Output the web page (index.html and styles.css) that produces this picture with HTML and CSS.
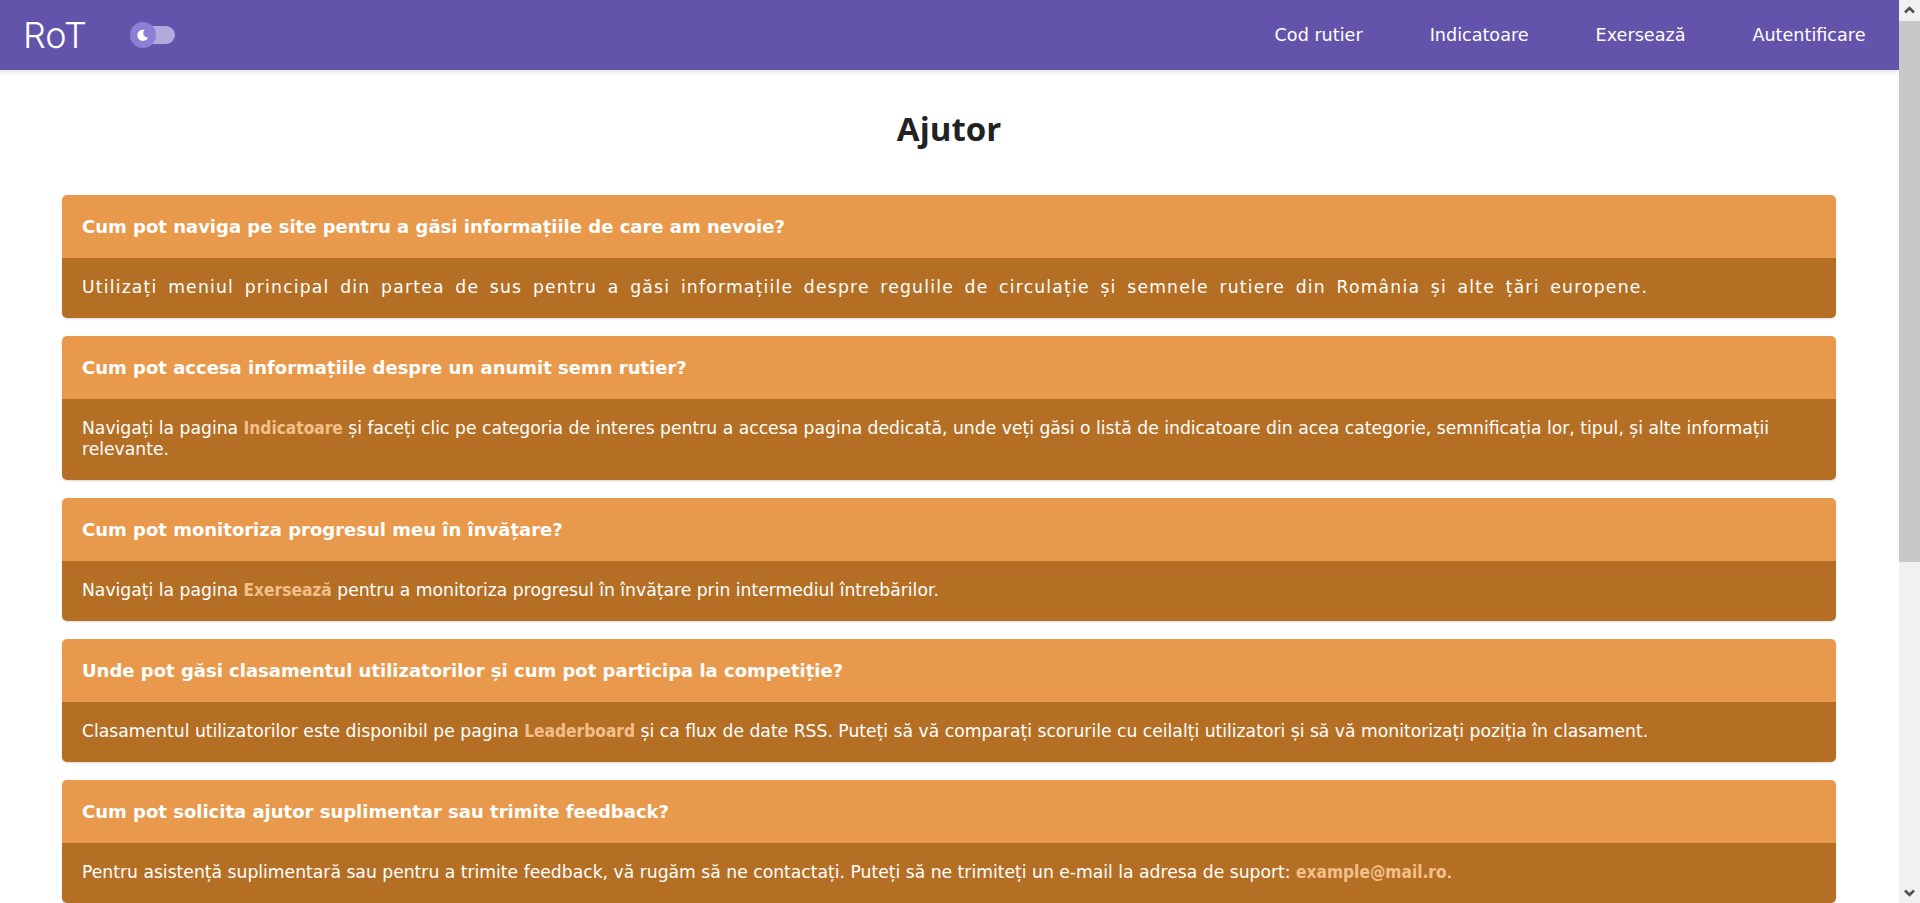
FILE: index.html
```html
<!DOCTYPE html>
<html lang="ro">
<head>
<meta charset="utf-8">
<title>Ajutor - RoT</title>
<link rel="stylesheet" href="styles.css">
</head>
<body>
<div class="page">
<header class="topbar">
  <div class="brand">
    <a class="logo" href="#">RoT</a>
    <span class="toggle">
      <span class="track"></span>
      <span class="knob">
        <svg viewBox="0 0 24 24" width="15" height="15"><path d="M15.5 3.2A9 9 0 1 0 20.8 15.6 7.2 7.2 0 0 1 15.5 3.2Z" fill="#fff"/></svg>
      </span>
    </span>
  </div>
  <nav class="nav">
    <a href="#">Cod rutier</a>
    <a href="#">Indicatoare</a>
    <a href="#">Exersează</a>
    <a href="#">Autentificare</a>
  </nav>
</header>
<main class="content">
  <h1 class="title">Ajutor</h1>
  <section class="faq">
    <article class="item">
      <h2 class="q">Cum pot naviga pe site pentru a găsi informațiile de care am nevoie?</h2>
      <p class="a a-wide">Utilizați meniul principal din partea de sus pentru a găsi informațiile despre regulile de circulație și semnele rutiere din România și alte țări europene.</p>
    </article>
    <article class="item">
      <h2 class="q">Cum pot accesa informațiile despre un anumit semn rutier?</h2>
      <p class="a">Navigați la pagina <a href="#">Indicatoare</a> și faceți clic pe categoria de interes pentru a accesa pagina dedicată, unde veți găsi o listă de indicatoare din acea categorie, semnificația lor, tipul, și alte informații relevante.</p>
    </article>
    <article class="item">
      <h2 class="q">Cum pot monitoriza progresul meu în învățare?</h2>
      <p class="a">Navigați la pagina <a href="#">Exersează</a> pentru a monitoriza progresul în învățare prin intermediul întrebărilor.</p>
    </article>
    <article class="item">
      <h2 class="q">Unde pot găsi clasamentul utilizatorilor și cum pot participa la competiție?</h2>
      <p class="a">Clasamentul utilizatorilor este disponibil pe pagina <a href="#">Leaderboard</a> și ca flux de date RSS. Puteți să vă comparați scorurile cu ceilalți utilizatori și să vă monitorizați poziția în clasament.</p>
    </article>
    <article class="item">
      <h2 class="q">Cum pot solicita ajutor suplimentar sau trimite feedback?</h2>
      <p class="a">Pentru asistență suplimentară sau pentru a trimite feedback, vă rugăm să ne contactați. Puteți să ne trimiteți un e-mail la adresa de suport: <a href="#">example@mail.ro</a>.</p>
    </article>
  </section>
</main>
</div>
<div class="scrollbar" aria-hidden="true">
  <span class="sb-btn"><svg viewBox="0 0 21 21" width="21" height="21"><polyline points="6,12.5 10.5,8 15,12.5" fill="none" stroke="#505050" stroke-width="2.6"/></svg></span>
  <span class="sb-thumb"></span>
  <span class="sb-track"></span>
  <span class="sb-btn"><svg viewBox="0 0 21 21" width="21" height="21"><polyline points="6,8.5 10.5,13 15,8.5" fill="none" stroke="#505050" stroke-width="2.6"/></svg></span>
</div>
</body>
</html>
```
FILE: styles.css
```css
* { box-sizing: border-box; }

html, body {
  margin: 0;
  height: 100%;
  overflow: hidden;
}

body {
  display: flex;
  font-family: "DejaVu Sans", "Liberation Sans", sans-serif;
  color: #222;
  background: #fff;
}

.page {
  flex: 1;
  min-width: 0;
  height: 100vh;
  overflow: hidden;
}

.scrollbar {
  width: 21px;
  flex: none;
  height: 100vh;
  display: flex;
  flex-direction: column;
  background: #f1f1f1;
}

.sb-btn {
  height: 21px;
  flex: none;
  display: block;
}

.sb-btn svg { display: block; }

.sb-thumb {
  height: 541px;
  flex: none;
  background: #c8c8c8;
}

.sb-track { flex: 1; }

.topbar {
  height: 70px;
  background: #6353ab;
  display: flex;
  align-items: center;
  justify-content: space-between;
  box-shadow: 0 2px 4px rgba(0,0,0,0.12);
}

.brand {
  display: flex;
  align-items: center;
  padding-left: 23px;
}

.logo {
  color: #fff;
  text-decoration: none;
  font-family: "Inter", "Liberation Sans", sans-serif;
  font-weight: 300;
  font-size: 36px;
  line-height: 1;
  margin-right: 43px;
}

.toggle {
  position: relative;
  display: inline-block;
  width: 46px;
  height: 26px;
}

.track {
  position: absolute;
  left: 8px;
  top: 4px;
  width: 37px;
  height: 18px;
  border-radius: 9px;
  background: #b2a9dc;
}

.knob {
  position: absolute;
  left: 0;
  top: 0;
  width: 26px;
  height: 26px;
  border-radius: 50%;
  background: #8c7fd6;
  display: flex;
  align-items: center;
  justify-content: center;
}

.nav {
  display: flex;
  align-items: center;
}

.nav a {
  color: #fff;
  text-decoration: none;
  font-size: 17.6px;
  padding: 0 33.5px;
}

.content {
  padding: 0 63px 0 62px;
}

.title {
  text-align: center;
  font-family: "Open Sans", "Liberation Sans", sans-serif;
  font-weight: 700;
  font-size: 33px;
  margin: 36px 0 43px;
  line-height: 46px;
}

.faq {
  display: flex;
  flex-direction: column;
  gap: 18px;
}

.item {
  border-radius: 5px;
  overflow: hidden;
  box-shadow: 0 1px 2px rgba(0,0,0,0.15);
}

.q {
  margin: 0;
  background: #e9994b;
  color: #fff;
  font-size: 18px;
  font-weight: 700;
  line-height: 23px;
  padding: 20px 20px;
}

.a {
  margin: 0;
  background: #b56f24;
  color: #fff;
  font-size: 17.2px;
  line-height: 21px;
  padding: 19px 20px 20px;
}

.a-wide {
  letter-spacing: 1.2px;
  word-spacing: 4px;
}

.a a {
  color: #f3c08c;
  font-family: "DejaVu Sans Condensed", "DejaVu Sans", sans-serif;
  font-weight: 700;
  text-decoration: none;
}
```
